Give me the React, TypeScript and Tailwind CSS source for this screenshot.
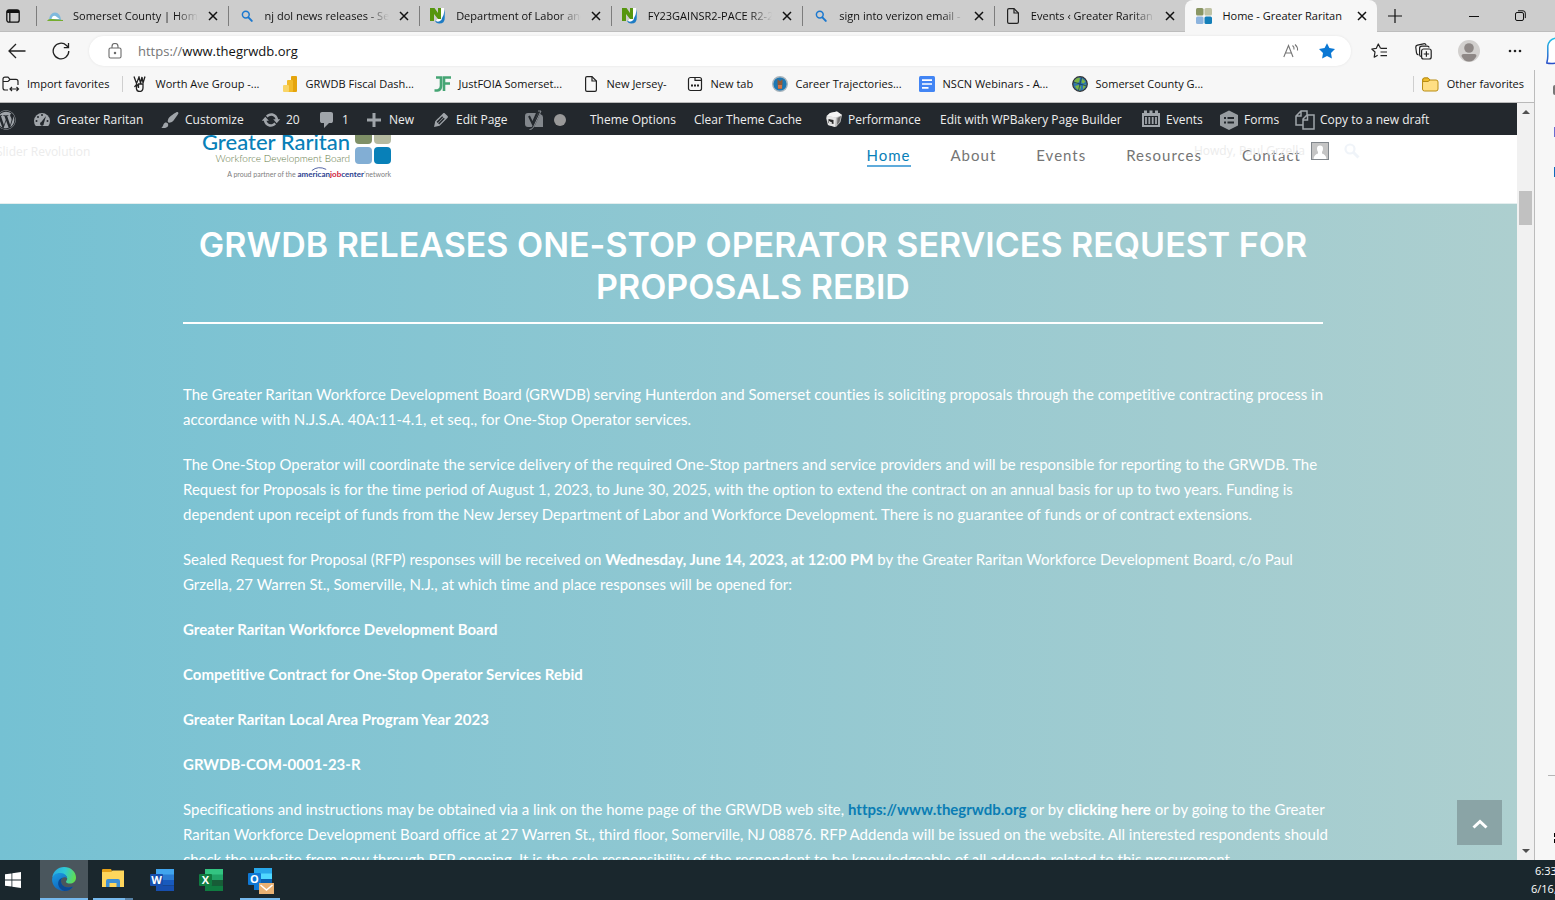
import React from "react";
import type { ReactNode } from "react";
import { FaWordpress } from "react-icons/fa";

type IconProps = { className?: string };

/* ---------- browser icons ---------- */

const Magnifier = () => (
  <svg viewBox="0 0 16 16" className="size-4" fill="none" stroke="#1b78cf">
    <circle cx="6.8" cy="6.6" r="3.4" strokeWidth="1.5" />
    <path d="M9.4 9.4l3.4 3.5" strokeWidth="2" strokeLinecap="round" />
  </svg>
);

const NjMark = () => (
  <svg viewBox="0 0 16 16" className="size-4">
    <path d="M8 0h6l1 9q-1 5-5 6l-4-2 2-3z" fill="#fff" />
    <path d="M0 0h4.500l3.500 5V0h3v11H8L4 6v7H0z" fill="#56960f" />
    <path d="M14.800 1v9q0 5.500-5.500 5.500-3.500 0-4.300-3 2 1.800 4.500.8t2.500-3.300l1.500-3z" fill="#1d7bc4" />
  </svg>
);

const PageIcon = () => (
  <svg viewBox="0 0 16 16" className="size-4" fill="none" stroke="#222" strokeWidth="1.200">
    <path d="M2.600 2q0-1.400 1.400-1.400h5l4.400 4.400v9q0 1.400-1.400 1.400H4q-1.400 0-1.400-1.400z" />
    <path d="M9 .8V5h4.400" />
  </svg>
);

const HillMark = () => (
  <svg viewBox="0 0 16 16" className="size-4">
    <path d="M2 12a6 7.500 0 0 1 12 0z" fill="#7fb9dd" />
    <path d="M4.500 11q1-4 4-3l4 3z" fill="#fff" />
    <path d="M0 13q1-2.500 5-2t11 1v1z" fill="#75ad2e" />
  </svg>
);

const SquaresMark = () => (
  <svg viewBox="0 0 16 16" className="size-4">
    <rect width="7.500" height="7.500" rx="1.500" fill="#8a9664" />
    <rect x="8.500" width="7.500" height="7.500" rx="1.500" fill="#bfc2a4" />
    <rect y="8.500" width="7.500" height="7.500" rx="1.500" fill="#8db4de" />
    <rect x="8.500" y="8.500" width="7.500" height="7.500" rx="1.500" fill="#147fb8" />
  </svg>
);

const Close = () => (
  <svg viewBox="0 0 10 10" className="size-2.5" stroke="#111" strokeWidth="1.500">
    <path d="M1 1l8 8M9 1L1 9" />
  </svg>
);

const tabs: { title: string; icon: ReactNode; active?: boolean }[] = [
  { title: "Somerset County | Home", icon: <HillMark /> },
  { title: "nj dol news releases - Search", icon: <Magnifier /> },
  { title: "Department of Labor and W", icon: <NjMark /> },
  { title: "FY23GAINSR2-PACE R2-2", icon: <NjMark /> },
  { title: "sign into verizon email - S", icon: <Magnifier /> },
  { title: "Events ‹ Greater Raritan W", icon: <PageIcon /> },
  { title: "Home - Greater Raritan", icon: <SquaresMark />, active: true },
];

function TabStrip() {
  return (
    <div className="flex h-8 shrink-0 border-b border-[#bdbdbd] bg-[#cdcdcd]">
      <button aria-label="Tab actions" className="flex w-9 shrink-0 items-center pl-[6px]">
        <svg viewBox="0 0 14 14" className="size-3.5" fill="none" stroke="#111" strokeWidth="1.300">
          <rect x=".8" y=".8" width="12.400" height="12.400" rx="2.200" />
          <path d="M1 2.500h12" strokeWidth="3" />
          <path d="M3.800 3v10" />
        </svg>
      </button>
      <div className="grid min-w-0 flex-1 grid-cols-7">
        {tabs.map((t) => (
          <div
            key={t.title}
            className={
              t.active
                ? "-mb-px flex min-w-0 items-center rounded-t-lg bg-[#f7f7f7]"
                : "flex min-w-0 items-center"
            }
          >
            <span className={t.active ? "h-5 w-px" : "h-5 w-px bg-[#7d7d7d]"} />
            <span className="ml-2.5 shrink-0">{t.icon}</span>
            <span
              className={
                t.active
                  ? "ml-2.5 min-w-0 flex-1 overflow-hidden whitespace-nowrap"
                  : "ml-2.5 min-w-0 flex-1 overflow-hidden whitespace-nowrap [mask-image:linear-gradient(to_right,black_82%,transparent)]"
              }
            >
              {t.title}
            </span>
            <button aria-label={"Close " + t.title} className="mr-[10px] ml-2.5 shrink-0">
              <Close />
            </button>
          </div>
        ))}
      </div>
      <div className="flex w-[178px] shrink-0 items-center pl-[11px]">
        <button aria-label="New tab">
          <svg viewBox="0 0 14 14" className="size-3.5" stroke="#111" strokeWidth="1.200">
            <path d="M7 0v14M0 7h14" />
          </svg>
        </button>
        <button aria-label="Minimize" className="ml-[67px]">
          <svg viewBox="0 0 10 10" className="size-2.5" stroke="#111">
            <path d="M0 5.500h10" />
          </svg>
        </button>
        <button aria-label="Restore" className="ml-9">
          <svg viewBox="0 0 11 11" className="size-[11px]" fill="none" stroke="#111">
            <rect x=".5" y="2.500" width="8" height="8" rx="1.500" />
            <path d="M3 .8h5q2.300 0 2.300 2.300v5" />
          </svg>
        </button>
      </div>
    </div>
  );
}

function Toolbar() {
  return (
    <div className="flex h-[38px] shrink-0 items-center overflow-hidden">
      <button aria-label="Back" className="ml-2">
        <svg viewBox="0 0 18 16" className="h-4 w-[18px]" fill="none" stroke="#222" strokeWidth="1.300">
          <path d="M8 1L1 8l7 7M1 8h16.500" />
        </svg>
      </button>
      <button aria-label="Refresh" className="ml-[26px]">
        <svg viewBox="0 0 18 18" className="size-[18px]" fill="none" stroke="#222" strokeWidth="1.300">
          <path d="M16.800 9A7.800 7.800 0 1 1 14.500 3.500L16.500 5.500M16.500 1v4.700h-4.700" />
        </svg>
      </button>
      <div className="ml-[19px] flex h-[30px] min-w-0 flex-1 items-center rounded-full bg-white pr-[15px] pl-[19px] shadow-[0_0_3px_rgba(0,0,0,0.08)]">
        <svg viewBox="0 0 14 16" className="h-4 w-3.5 shrink-0" fill="none" stroke="#6b6b6b" strokeWidth="1.100">
          <rect x="1" y="5" width="12" height="10" rx="1.500" />
          <path d="M4 5V3.500a3 3 0 0 1 6 0V5" />
          <circle cx="7" cy="10" r=".7" fill="#6b6b6b" />
        </svg>
        <button className="ml-4 text-left text-[13px]" aria-label="Address bar">
          <span className="text-[#767676]">https://</span>
          <span className="text-[#111]">www.thegrwdb.org</span>
        </button>
        <button aria-label="Read aloud" className="ml-auto">
          <svg viewBox="0 0 16 14" className="h-3.5 w-4" fill="none" stroke="#767676" strokeWidth="1.100">
            <path d="M.8 13L5.500 1.500 10 13M2.500 9h6M9.500 1.500q2 1.500 1.500 4M12 .5q3 2.500 2.500 6" />
          </svg>
        </button>
        <button aria-label="Edit favorite" className="ml-[19px]">
          <svg viewBox="0 0 18 18" className="size-[18px]" fill="#0b78d4">
            <path d="M9 1.200l2.400 4.900 5.600.8-4 4 .9 5.700L9 14l-4.900 2.600.9-5.700-4-4 5.600-.8z" />
          </svg>
        </button>
      </div>
      <div className="flex w-[204px] shrink-0 items-center">
        <button aria-label="Favorites" className="ml-5">
          <svg viewBox="0 0 17 16" className="h-4 w-[17px]" fill="none" stroke="#222" strokeWidth="1.200" strokeLinejoin="round">
            <path d="M9.500 5.300L7.300 1 5.200 5.400.8 6l3.200 3-.8 5.200 3.500-1.900M9.500 5.300H16M9.500 9H16M9.500 12.700H16" />
          </svg>
        </button>
        <button aria-label="Collections" className="ml-[27px]">
          <svg viewBox="0 0 17 17" className="size-[17px]" fill="none" stroke="#222" strokeWidth="1.200">
            <path d="M3.500 12Q1.800 11.500 1.500 9.800L.8 4.500Q.6 2.600 2.500 2.200L8.500.8q2-.4 2.600 1.400" />
            <path d="M6 13.500q-1.400-.3-1.400-2V5.300q0-2.200 2.200-2.200h5.500q1.500 0 1.900 1.400" />
            <rect x="6.600" y="6" width="9.600" height="10" rx="2" />
            <path d="M11.400 8.300v5.400M8.700 11h5.400" />
          </svg>
        </button>
        <button aria-label="Profile" className="ml-[26px]">
          <svg viewBox="0 0 22 22" className="size-[22px]">
            <circle cx="11" cy="11" r="11" fill="#d2d0ce" />
            <circle cx="11" cy="8" r="4.800" fill="#8e8886" />
            <path d="M3.500 16q0-2 2-2h11q2 0 2 2-2.500 5.500-7.500 5.500T3.500 16z" fill="#8e8886" />
          </svg>
        </button>
        <button aria-label="Settings and more" className="ml-7">
          <svg viewBox="0 0 14 4" className="h-1 w-3.5" fill="#222">
            <circle cx="2" cy="2" r="1.300" />
            <circle cx="7" cy="2" r="1.300" />
            <circle cx="12" cy="2" r="1.300" />
          </svg>
        </button>
        <button aria-label="Discover" className="ml-auto">
          <svg viewBox="0 0 9 30" className="h-[30px] w-[9px]" fill="#fff" strokeWidth="1.500">
            <defs>
              <linearGradient id="bing" x2="0" y2="1">
                <stop stopColor="#24c3e8" />
                <stop offset="1" stopColor="#2a50c8" />
              </linearGradient>
            </defs>
            <path d="M10 2Q3 3 1.800 10v10q0 3-1 7 4 1 9 0" stroke="url(#bing)" />
          </svg>
        </button>
      </div>
    </div>
  );
}

/* ---------- favourites ---------- */

const ImportIcon = () => (
  <svg viewBox="0 0 18 16" className="h-4 w-[18px]" fill="none" stroke="#222" strokeWidth="1.200">
    <path d="M6 14H3Q1 14 1 12V3Q1 1.200 3 1.200h3l2 2.200h6q2 0 2 2V9M1 5.500h5l2-2" />
    <path d="M8 13h8.500M10 11l-2 2 2 2M14.500 11l2 2-2 2" />
  </svg>
);
const WorthIcon = () => (
  <svg viewBox="0 0 16 16" className="size-4" fill="none" stroke="#222" strokeWidth="1.300">
    <path d="M2 .5l2.500 7L7 1l1.500 6L10 1l1 6 2-6.500M5 8l-2.500 3M6 8.500q-2 2-1.500 4.500.5 2.500 3 2.500 3.500 0 3.500-4V8H6.500v4" />
  </svg>
);
const BarsIcon = () => (
  <svg viewBox="0 0 16 16" className="size-4">
    <rect x="9" y="0" width="6" height="16" rx="1" fill="#e5a50d" />
    <rect x="5" y="4" width="6" height="12" rx="1" fill="#f2bb29" />
    <rect x="1" y="9" width="6" height="7" rx="1" fill="#f9d567" />
  </svg>
);
const JfIcon = () => (
  <svg viewBox="0 0 17 16" className="h-4 w-[17px]" fill="none" stroke="#45a574" strokeWidth="2.600">
    <path d="M2 1.500h5V10q0 4-3.500 4.500H.5M17 1.500H10V15M10 7.500h6" />
  </svg>
);
const NewTabIcon = () => (
  <svg viewBox="0 0 16 16" className="size-4" fill="none" stroke="#222" strokeWidth="1.200">
    <rect x="1.500" y="1.500" width="13" height="13" rx="2" />
    <path d="M8 1.500v2.800h6.500" />
    <path d="M4 9.500h2M7 9.500h2M10 9.500h2" strokeWidth="1.800" />
  </svg>
);
const SealIcon = () => (
  <svg viewBox="0 0 16 16" className="size-4">
    <circle cx="8" cy="8" r="7.300" fill="#1d78b4" stroke="#a9b5bd" strokeWidth="1.400" />
    <path d="M5.500 3l2 2h1l2-2v4l-.5 6h-4l-.5-6z" fill="#8e5a3a" />
    <path d="M6 9h4v3.500H6z" fill="#d87545" />
  </svg>
);
const DocIcon = () => (
  <svg viewBox="0 0 16 16" className="size-4">
    <rect width="16" height="16" rx="1.500" fill="#4285f4" />
    <path d="M3 4.200h10M3 8h10M3 11.800h6.500" stroke="#fff" strokeWidth="1.700" />
  </svg>
);
const GlobeIcon = () => (
  <svg viewBox="0 0 16 16" className="size-4">
    <circle cx="8" cy="8" r="7.300" fill="#2f74ad" stroke="#333" strokeWidth="1.200" />
    <path d="M2 5q3-4 6-3l-1 4-3 2zM10 2.500l3.500 3-2 2-2-1zM3 10l4-1 2 2-1 3.500q-4-1-5-4.500zM11 9l3-.5q0 3-3 5z" fill="#7db544" />
    <path d="M1.500 6l13 4M9.500 1.500l-3 13" stroke="#163d55" strokeWidth=".8" />
  </svg>
);
const FolderIcon = () => (
  <svg viewBox="0 0 17 15" className="h-[15px] w-[17px]" fill="#ffdf84" stroke="#b98d14">
    <path d="M.6 3Q.6 1 2.500 1H6l2 2h6q2 0 2 2v7q0 2-2 2H2.500q-2 0-2-2z" />
    <path d="M.8 4.500H6l2-1.500-1.800-2H2.500Q.8 1 .8 3z" fill="#f0bd2c" />
  </svg>
);

const favorites: { label: string; icon: ReactNode; width: string }[] = [
  { label: "Worth Ave Group -...", icon: <WorthIcon />, width: "w-[150px]" },
  { label: "GRWDB Fiscal Dash...", icon: <BarsIcon />, width: "w-[152px]" },
  { label: "JustFOIA Somerset...", icon: <JfIcon />, width: "w-[149px]" },
  { label: "New Jersey-", icon: <PageIcon />, width: "w-[104px]" },
  { label: "New tab", icon: <NewTabIcon />, width: "w-[85px]" },
  { label: "Career Trajectories...", icon: <SealIcon />, width: "w-[147px]" },
  { label: "NSCN Webinars - A...", icon: <DocIcon />, width: "w-[153px]" },
  { label: "Somerset County G...", icon: <GlobeIcon />, width: "w-[150px]" },
];

function FavoritesBar() {
  return (
    <nav aria-label="Favorites bar" className="flex h-[33px] shrink-0 items-center border-b border-[#b9b9b9] pb-1 pl-[2px] whitespace-nowrap">
      <button className="flex items-center gap-[7px]">
        <ImportIcon />
        Import favorites
      </button>
      <span className="ml-auto h-4 w-px bg-[#cfcfcf]" />
      <div className="flex w-[1278px] shrink-0 items-center pl-[9px]">
        {favorites.map((f) => (
          <a key={f.label} href="#" className={"flex shrink-0 items-center gap-2 " + f.width}>
            {f.icon}
            {f.label}
          </a>
        ))}
      </div>
      <span className="ml-auto h-4 w-px bg-[#cfcfcf]" />
      <button className="mr-[10px] ml-2 flex items-center gap-2">
        <FolderIcon />
        Other favorites
      </button>
    </nav>
  );
}

/* ---------- admin bar icons ---------- */

const Dash = ({ d }: { d: string }) => (
  <svg viewBox="0 0 20 20" className="size-5" fill="#a0a5aa" fillRule="evenodd">
    <path d={d} />
  </svg>
);
const Gauge = () => (
  <svg viewBox="0 0 20 20" className="size-5">
    <path d="M3.760 16h12.480A8 8 0 1 0 3.760 16z" fill="#a0a5aa" />
    <g fill="#23282d">
      <circle cx="10" cy="5" r="1" />
      <circle cx="6" cy="7" r="1" />
      <circle cx="4.500" cy="11" r="1" />
      <circle cx="15.500" cy="11" r="1" />
      <path d="M14 6l-2.200 7.500a1.900 1.900 0 1 1-2.500-1.500z" />
    </g>
  </svg>
);
const Yoast = () => (
  <svg viewBox="0 0 20 20" className="size-5">
    <path d="M4 3h11l2 1.500q2 .5 2 3V17H4q-3 0-3-3V6q0-3 3-3z" fill="#82878c" />
    <path d="M5 6l3.500 7.500L14 .8h2.500L9.500 16q-1 3-4 3.200" fill="none" stroke="#23282d" strokeWidth="2" />
    <path d="M14 1h3L9.500 17q-1 2.500-4 2.500" fill="none" stroke="#a0a5aa" strokeWidth=".8" />
  </svg>
);
const Cube = () => (
  <svg viewBox="0 0 18 18" className="size-[18px]">
    <path d="M5 2l7-1.500L17 4l-1.500 7L11 16l-8-2L1 7z" fill="#bcbcbc" />
    <path d="M5 2l7-1.500L17 4l-6 2.500L1.500 5z" fill="#f4f4f4" />
    <path d="M1.500 5L11 6.500 10 16l-7-2z" fill="#e6e6e6" />
    <path d="M3.500 8l5 1v4l-5-1z" fill="#2b2b2b" />
    <path d="M4 10l3 1.500-.5 1.500-2.500-.5z" fill="#e6e6e6" />
    <path d="M12.500 7l3.500-2-1.500 6-2.500 3z" fill="#6c6c6c" />
  </svg>
);
const CalendarIcon = () => (
  <svg viewBox="0 0 20 20" className="size-5">
    <path d="M1 3h18v14H1zM3 .5h3v4H3zM8.500.5h3v4h-3zM14 .5h3v4h-3z" fill="#a0a5aa" />
    <path d="M3 6h14v9H3z" fill="#23282d" />
    <path d="M5 7v7M8.300 7v7M11.700 7v7M15 7v7" stroke="#a0a5aa" strokeWidth="1.800" />
  </svg>
);
const HexForm = () => (
  <svg viewBox="0 0 20 20" className="size-5">
    <path d="M10 .5l9 4.500v10.500l-9 4.500-9-4.500V5z" fill="#979ca0" />
    <path d="M5 8h2M8.500 8H15M5 12.500h2M8.500 12.500H15" stroke="#23282d" strokeWidth="2" />
  </svg>
);
const CopyPages = () => (
  <svg viewBox="0 0 20 20" className="size-5" fill="none" stroke="#a0a5aa" strokeWidth="1.500">
    <path d="M7.500 15H1V6l5-5h6v4M6 1v5H1M8 19V9l4-4h7v14zM12.500 5v5H8" />
  </svg>
);

const adminItems: { key: string; label?: string; icon?: ReactNode; width: string }[] = [
  { key: "site", label: "Greater Raritan", icon: <Gauge />, width: "w-[128px]" },
  { key: "customize", label: "Customize", icon: <Dash d="M18.330 3.570s.27-.8-.31-1.360c-.53-.52-1.220-.24-1.220-.24-.61.3-5.760 3.470-7.670 5.570-.86.96-2.060 3.790-1.090 4.820.92.980 3.960-.17 4.790-1 2.060-2.060 5.210-7.170 5.500-7.790zM1.400 17.650c2.370-1.560 1.460-3.410 3.230-4.640.93-.65 2.220-.62 3.080.29.63.67.8 2.570-.16 3.460-1.570 1.450-4 1.550-6.150.89z" />, width: "w-[101px]" },
  { key: "updates", label: "20", icon: <Dash d="M10.200 3.280c3.530 0 6.430 2.610 6.920 6h2.080l-3.500 4-3.500-4h2.320c-.45-1.970-2.210-3.450-4.320-3.450-1.450 0-2.730.71-3.540 1.780L4.950 5.660C6.230 4.200 8.110 3.280 10.200 3.280zm-.4 13.440c-3.520 0-6.430-2.610-6.920-6H.8l3.500-4 3.500 4H5.480c.45 1.970 2.210 3.450 4.320 3.450 1.450 0 2.730-.71 3.540-1.780l1.710 1.950c-1.280 1.460-3.150 2.380-5.250 2.380z" />, width: "w-[56px]" },
  { key: "comments", label: "1", icon: <Dash d="M5 2h9q.82 0 1.410.59T16 4v7q0 .82-.59 1.410T14 13h-2l-5 5v-5H5q-.82 0-1.410-.59T3 11V4q0-.82.59-1.410T5 2z" />, width: "w-[47px]" },
  { key: "new", label: "New", icon: <Dash d="M17 8.500v3h-5.500V17h-3v-5.500H3v-3h5.500V3h3v5.500z" />, width: "w-[67px]" },
  { key: "edit", label: "Edit Page", icon: <Dash d="M13.890 3.390l2.710 2.720c.46.46.42 1.240.03 1.640l-8.010 8.020-5.560 1.160 1.160-5.580s7.600-7.630 7.990-8.030c.39-.39 1.220-.39 1.680.07zm-2.730 2.790l-5.590 5.610 1.110 1.110 5.540-5.650zm-2.970 8.230l5.580-5.600-1.070-1.080-5.590 5.600z" />, width: "w-[93px]" },
  { key: "seo", icon: <Yoast />, width: "w-[30px]" },
  { key: "score", icon: <span className="block size-3 rounded-full bg-[#999]" />, width: "w-[36px]" },
  { key: "options", label: "Theme Options", width: "w-[104px]" },
  { key: "cache", label: "Clear Theme Cache", width: "w-[131px]" },
  { key: "perf", label: "Performance", icon: <Cube />, width: "w-[115px]" },
  { key: "bakery", label: "Edit with WPBakery Page Builder", width: "w-[201px]" },
  { key: "events", label: "Events", icon: <CalendarIcon />, width: "w-[78px]" },
  { key: "forms", label: "Forms", icon: <HexForm />, width: "w-[76px]" },
  { key: "copy", label: "Copy to a new draft", icon: <CopyPages />, width: "w-[150px]" },
];

function AdminBar() {
  return (
    <nav aria-label="Admin" className="flex h-8 shrink-0 items-center overflow-hidden bg-[#23282d] pt-0.5 text-xs whitespace-nowrap text-[#eee]">
      <a href="#" aria-label="WordPress" className="-ml-1 w-9 shrink-0">
        <FaWordpress className="size-5 text-[#a0a5aa]" />
      </a>
      {adminItems.map((i) => (
        <a key={i.key} href="#" aria-label={i.label ?? i.key} className={"flex shrink-0 items-center gap-[5px] " + i.width}>
          {i.icon}
          {i.label}
        </a>
      ))}
    </nav>
  );
}

/* ---------- site ---------- */

function SiteLogo() {
  return (
    <a href="#" className="ml-[202px] block w-[189px] shrink-0 font-['Lato']">
      <span className="flex justify-between">
        <span className="-mt-1 text-right whitespace-nowrap">
          <span className="block text-[22px] leading-[22px] font-medium text-[#0880b8]">Greater Raritan</span>
          <span className="block text-[10px] leading-[11px] font-light text-[#647a48]">Workforce Development Board</span>
        </span>
        <span className="-mt-2 grid shrink-0 grid-cols-2 gap-0.5">
          <i className="size-[17px] rounded bg-[#7f9067]" />
          <i className="size-[17px] rounded bg-[#b5baa0]" />
          <i className="size-[17px] rounded bg-[#82aed4]" />
          <i className="size-[17px] rounded bg-[#0880b8]" />
        </span>
      </span>
      <span className="relative mt-[5px] block text-right text-[7px] leading-[10px] whitespace-nowrap text-[#808080]">
        A proud partner of the{" "}
        <b className="text-[8px] text-[#2b3f8f]">
          american<span className="text-[#d0203a]">job</span>center
        </b>
        <svg viewBox="0 0 20 5" className="absolute -top-0.5 right-[62px] h-1 w-5" fill="none" stroke="#2b3f8f">
          <path d="M1 4.500Q9-2 19 3" />
        </svg>
        ’network
      </span>
    </a>
  );
}

const siteLinks = ["About", "Events", "Resources", "Contact"];

function SiteHeader() {
  return (
    <header className="relative flex h-[69px] shrink-0 items-start overflow-hidden border-b border-[#e4eeee] bg-white">
      <span className="absolute top-[9px] -left-1 text-xs text-[#ececec]">Slider Revolution</span>
      <SiteLogo />
      <nav aria-label="Main" className="mt-2.5 mr-[216px] ml-auto flex gap-10 font-['Lato'] text-[15px] leading-5 tracking-[1px] text-[#757575]">
        <a href="#" className="border-b-2 border-[#5fabdb] text-[#0880b8]">
          Home
        </a>
        {siteLinks.map((l) => (
          <a key={l} href="#">
            {l}
          </a>
        ))}
      </nav>
      <div className="absolute top-[7px] right-[157px] flex items-center text-xs text-[#ececec]">
        <span>Howdy, Paul Grzella</span>
        <svg viewBox="0 0 18 18" className="ml-[6px] size-[18px]">
          <rect x=".5" y=".5" width="17" height="17" fill="#c4c4c4" stroke="#82878c" />
          <path d="M9 3.500q3 0 3 3.300 0 2-1 3.200v1.500q4 1 4.500 5.500h-13q.5-4.500 4.500-5.500V10q-1-1.200-1-3.200 0-3.300 3-3.300z" fill="#fff" />
        </svg>
        <svg viewBox="0 0 16 16" className="ml-[15px] size-4" fill="none" stroke="#f0f4f9" strokeWidth="2.200">
          <circle cx="6" cy="6" r="4.500" />
          <path d="M9.500 9.500l5 5" strokeWidth="3" />
        </svg>
      </div>
    </header>
  );
}

function Announcement() {
  return (
    <main className="min-h-0 flex-1 overflow-hidden bg-linear-to-r from-[#75c1d3] to-[#adcfcf] pr-[11px] text-white">
      <div className="mx-auto max-w-[1140px] pt-5 font-['Lato'] text-[15px] leading-[25px] [font-variant-ligatures:none]">
        <h1 className="-mx-2 text-center font-['Inter'] text-[34px] leading-[42px] font-semibold">
          GRWDB RELEASES ONE-STOP OPERATOR SERVICES REQUEST FOR PROPOSALS REBID
        </h1>
        <hr className="mt-3.5 border-t-2 border-white" />
        <div className="mt-[58px] -mr-4 space-y-5">
          <p>
            The Greater Raritan Workforce Development Board (GRWDB) serving Hunterdon and Somerset counties is soliciting proposals through the competitive contracting process in
            <br />
            accordance with N.J.S.A. 40A:11-4.1, et seq., for One-Stop Operator services.
          </p>
          <p>
            The One-Stop Operator will coordinate the service delivery of the required One-Stop partners and service providers and will be responsible for reporting to the GRWDB. The
            <br />
            Request for Proposals is for the time period of August 1, 2023, to June 30, 2025, with the option to extend the contract on an annual basis for up to two years. Funding is
            <br />
            dependent upon receipt of funds from the New Jersey Department of Labor and Workforce Development. There is no guarantee of funds or of contract extensions.
          </p>
          <p>
            Sealed Request for Proposal (RFP) responses will be received on <b>Wednesday, June 14, 2023, at 12:00 PM</b> by the Greater Raritan Workforce Development Board, c/o Paul
            <br />
            Grzella, 27 Warren St., Somerville, N.J., at which time and place responses will be opened for:
          </p>
          <p className="font-bold">Greater Raritan Workforce Development Board</p>
          <p className="font-bold">Competitive Contract for One-Stop Operator Services Rebid</p>
          <p className="font-bold">Greater Raritan Local Area Program Year 2023</p>
          <p className="font-bold">GRWDB-COM-0001-23-R</p>
          <p>
            Specifications and instructions may be obtained via a link on the home page of the GRWDB web site,{" "}
            <a href="#" className="font-bold text-[#0a7db4]">https://www.thegrwdb.org</a> or by <b>clicking here</b> or by going to the Greater
            <br />
            Raritan Workforce Development Board office at 27 Warren St., third floor, Somerville, NJ 08876. RFP Addenda will be issued on the website. All interested respondents should
            <br />
            check the website from now through RFP opening. It is the sole responsibility of the respondent to be knowledgeable of all addenda related to this procurement.
          </p>
        </div>
      </div>
    </main>
  );
}

function Scrollbar() {
  return (
    <div className="flex w-[17px] shrink-0 flex-col items-center bg-[#f1f1f1]">
      <svg viewBox="0 0 8 4" className="mt-[7px] h-1 w-2" fill="#505050">
        <path d="M0 4l4-4 4 4z" />
      </svg>
      <div className="mt-[77px] h-[34px] w-[13px] bg-[#c1c1c1]" />
      <svg viewBox="0 0 8 4" className="mt-auto mb-[7px] h-1 w-2" fill="#505050">
        <path d="M0 0l4 4 4-4z" />
      </svg>
    </div>
  );
}

function EdgeSidebar() {
  return (
    <aside className="flex w-[21px] shrink-0 flex-col items-end overflow-hidden border-l border-[#bcbcbc]">
      <span className="mt-[15px] h-2.5 w-0.5 rounded-l bg-[#777]" />
      <span className="mt-8 h-2.5 w-px bg-[#6a6fd0]" />
      <span className="mt-[30px] h-2.5 w-px bg-[#0f6cbd]" />
      <span className="mt-auto h-px w-[7px] bg-[#b5b5b5]" />
      <span className="mt-[57px] h-1 w-px bg-black" />
      <span className="mt-0.5 mb-[17px] h-1 w-px bg-black" />
    </aside>
  );
}

/* ---------- taskbar ---------- */

const WindowsIcon = ({ className }: IconProps) => (
  <svg viewBox="0 0 16 16" className={className} fill="#fff">
    <path d="M0 2.300l6.500-.9v6.200H0zM7.300 1.300L16 0v7.600H7.300zM0 8.400h6.500v6.200L0 13.700zM7.300 8.400H16V16l-8.700-1.200z" />
  </svg>
);
const EdgeIcon = () => (
  <svg viewBox="0 0 24 24" className="size-6">
    <defs>
      <linearGradient id="edgeTop" x1="0" y1=".3" x2="1" y2=".5">
        <stop stopColor="#2aa9e0" />
        <stop offset=".5" stopColor="#2fc9d6" />
        <stop offset="1" stopColor="#62dd4c" />
      </linearGradient>
      <linearGradient id="edgeLow" x2=".6" y2="1">
        <stop stopColor="#1b9de2" />
        <stop offset="1" stopColor="#0f5fb8" />
      </linearGradient>
    </defs>
    <path d="M.3 10.500C1 4.500 6 0 12 0c7 0 12 5 12 10.500 0 4-3 6-6 6-2.500 0-4-.8-4-1.800 0-.8 1.200-1.200 1.200-3.200 0-2-2-4-5-4-5 0-9.900 3-9.900 3z" fill="url(#edgeTop)" />
    <path d="M.1 12C.5 7.500 5 5.500 9 6c3.500.3 6.200 2.800 6.200 5.500-1.500-2-6-2-6.200 2.500-.2 5 5 8 12 5.500-2 3-5 4.500-9 4.500C5 24-.4 18.500.1 12z" fill="url(#edgeLow)" />
    <path d="M9 14c.2-2 1-3 2-3.500-4 1-5.500 4.500-4.500 8 1 3 3 4.500 6 5.500 3.500 0 6.500-1.500 8.500-4.500C14 22 9 19 9 14z" fill="#0c4a94" />
  </svg>
);
const ExplorerIcon = () => (
  <svg viewBox="0 0 22 20" className="h-5 w-[22px]">
    <path d="M0 1q0-1 1-1h8l1 2-1 2H0z" fill="#e6a117" />
    <path d="M0 3h9l1.500-1.500H22V18H0z" fill="#ffd65c" />
    <path d="M4 18v-6q0-2 2-2h10q2 0 2 2v6h-3.500v-4h-7v4z" fill="#3d8fd6" />
  </svg>
);

function OfficeIcon({ letter, back, mid, dark, front }: { letter: string; back: string; mid: string; dark: string; front: string }) {
  return (
    <span className="relative block h-[22px] w-6">
      <svg viewBox="0 0 24 22" className="h-[22px] w-6">
        <path d="M6 0h18v6H6z" fill={back} />
        <path d="M6 5.500h18V11H6z" fill={mid} />
        <path d="M6 11h18v5.500H6z" fill={dark} />
        <path d="M6 16.500h18V22H6z" fill={front} />
        <rect y="5" width="13" height="12" rx="1" fill={front} />
      </svg>
      <span className="absolute top-[5px] left-0 w-[13px] text-center text-[11px] leading-3 font-bold text-white">{letter}</span>
    </span>
  );
}

function Taskbar() {
  return (
    <footer className="flex h-10 shrink-0 items-stretch overflow-hidden bg-[#1a272d] text-white">
      <button aria-label="Start" className="flex w-10 items-center pl-[5px]">
        <WindowsIcon className="size-4" />
      </button>
      <button aria-label="Microsoft Edge" className="flex w-12 items-center justify-center border-b-2 border-[#76b9ed] bg-[#4a565d]">
        <EdgeIcon />
      </button>
      <button aria-label="File Explorer" className="relative ml-[5px] flex w-10 items-center justify-center border-b-2 border-[#76b9ed]">
        <ExplorerIcon />
        <span className="absolute right-0 -bottom-0.5 h-0.5 w-2 bg-[#5681a5]" />
      </button>
      <button aria-label="Word" className="ml-[9px] flex w-10 items-center justify-center">
        <OfficeIcon letter="W" back="#41a5ee" mid="#2b7cd3" dark="#185abd" front="#174fae" />
      </button>
      <button aria-label="Excel" className="ml-[9px] flex w-10 items-center justify-center">
        <OfficeIcon letter="X" back="#33c481" mid="#21a366" dark="#185c37" front="#107c41" />
      </button>
      <button aria-label="Outlook" className="relative ml-[9px] flex w-10 items-center justify-center border-b-2 border-[#76b9ed]">
        <OfficeIcon letter="O" back="#28a8ea" mid="#50d9ff" dark="#0a5fb0" front="#0f78d4" />
        <svg viewBox="0 0 15 11" className="absolute right-[6px] bottom-1 h-[11px] w-[15px]">
          <rect width="15" height="11" fill="#e9b173" />
          <path d="M1.500 2L7.500 7l6-5" fill="none" stroke="#fff" strokeWidth="1.500" />
        </svg>
      </button>
      <div className="ml-auto flex w-6 flex-col items-start pt-[2px] text-[11px] leading-[18px] whitespace-nowrap">
        <span className="pl-1">6:33</span>
        <span>6/16,</span>
      </div>
    </footer>
  );
}

export default function App() {
  return (
    <div className="flex h-screen flex-col overflow-hidden bg-[#f7f7f7] font-['Open_Sans',sans-serif] text-[11px] leading-4 text-[#111]">
      <TabStrip />
      <Toolbar />
      <div className="flex min-h-0 flex-1">
        <div className="flex min-w-0 flex-1 flex-col">
          <FavoritesBar />
          <div className="flex min-h-0 flex-1">
            <div className="relative flex min-w-0 flex-1 flex-col">
              <AdminBar />
              <SiteHeader />
              <Announcement />
              <button aria-label="Back to top" className="absolute right-[15px] bottom-[15px] flex size-[45px] items-center justify-center bg-[#8aa4a6]">
                <svg viewBox="0 0 16 10" className="mt-0.5 h-2.5 w-4" fill="none" stroke="#fff" strokeWidth="3">
                  <path d="M1.500 8.500L8 2.500l6.500 6" />
                </svg>
              </button>
            </div>
            <Scrollbar />
          </div>
        </div>
        <EdgeSidebar />
      </div>
      <Taskbar />
    </div>
  );
}
